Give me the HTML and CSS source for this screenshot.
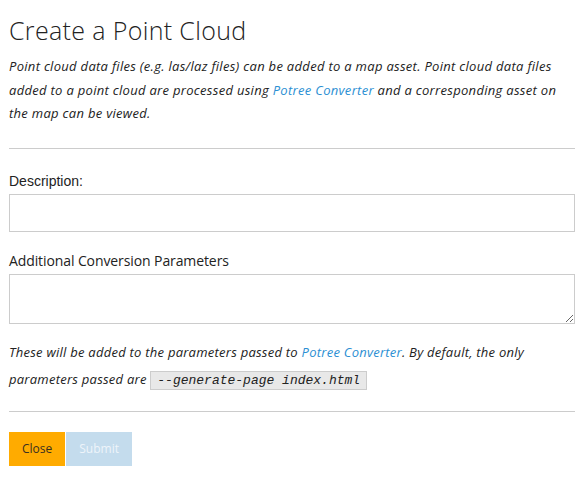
FILE: index.html
```html
<!DOCTYPE html>
<html>
<head>
<meta charset="utf-8">
<link rel="stylesheet" href="styles.css">
</head>
<body>
<div class="modal">
  <h1 class="title">Create a Point Cloud</h1>
  <p class="intro">Point cloud data files (e.g. las/laz files) can be added to a map asset. Point cloud data files added to a point cloud are processed using <a class="link" href="#">Potree Converter</a> and a corresponding asset on the map can be viewed.</p>
  <hr class="rule">
  <div class="field field-first">
    <label class="label label-desc">Description:</label>
    <input class="input" type="text">
  </div>
  <div class="field">
    <label class="label">Additional Conversion Parameters</label>
    <textarea class="textarea"></textarea>
  </div>
  <p class="help">These will be added to the parameters passed to <a class="link" href="#">Potree Converter</a>. By default, the only parameters passed are <code class="code">--generate-page index.html</code></p>
  <hr class="rule rule-bottom">
  <div class="actions">
    <button class="btn btn-close">Close</button>
    <button class="btn btn-submit">Submit</button>
  </div>
</div>
</body>
</html>
```

FILE: styles.css
```css
html, body {
  margin: 0;
  padding: 0;
  background: #ffffff;
}
body {
  font-family: "Open Sans", "Lato", sans-serif;
  color: #222222;
}
.modal {
  padding: 0 9px;
}
.title {
  font-family: "Open Sans", sans-serif;
  font-weight: 300;
  font-size: 25px;
  letter-spacing: 0.35px;
  line-height: 30px;
  margin: 15px 0 10px 0;
  color: #222;
}
.intro {
  font-style: italic;
  font-size: 13px;
  letter-spacing: 0.3px;
  line-height: 23.5px;
  margin: 0 0 22px 0;
  color: #222;
}
.link {
  color: #2b8fd3;
  text-decoration: none;
}
.rule {
  border: none;
  border-top: 1px solid #cccccc;
  margin: 0;
}
.field {
  display: flex;
  flex-direction: column;
}
.field-first {
  margin-top: 22px;
}
.label {
  font-size: 14px;
  line-height: 20px;
  letter-spacing: -0.1px;
  margin-bottom: 3px;
  color: #222;
}
.label-desc {
  font-family: "Liberation Sans", Arial, sans-serif;
  letter-spacing: 0;
}
.input {
  box-sizing: border-box;
  height: 38px;
  border: 1px solid #cccccc;
  margin: 0 0 19px 0;
  padding: 0 8px;
  font-size: 14px;
}
.textarea {
  box-sizing: border-box;
  height: 50px;
  border: 1px solid #cccccc;
  margin: 0;
  padding: 6px 8px;
  resize: vertical;
  font-size: 14px;
  display: block;
}
.help {
  font-style: italic;
  font-size: 13px;
  letter-spacing: 0.25px;
  line-height: 27px;
  margin: 15px 0 17px 0;
}
.code {
  font-family: "Liberation Mono", "DejaVu Sans Mono", monospace;
  font-style: italic;
  font-size: 13px;
  letter-spacing: 0;
  background: #e8e8e8;
  border: 1px solid #cccccc;
  padding: 1px 6px;
  color: #222;
}
.rule-bottom {
  margin-bottom: 20px;
}
.actions {
  display: flex;
  gap: 1px;
}
.btn {
  height: 34px;
  border: none;
  padding: 0 13px;
  font-family: "Open Sans", sans-serif;
  font-size: 12px;
}
.btn-close {
  background: #ffab00;
  color: #3a3020;
}
.btn-submit {
  background: #c4dced;
  color: #eef4fa;
}
```
